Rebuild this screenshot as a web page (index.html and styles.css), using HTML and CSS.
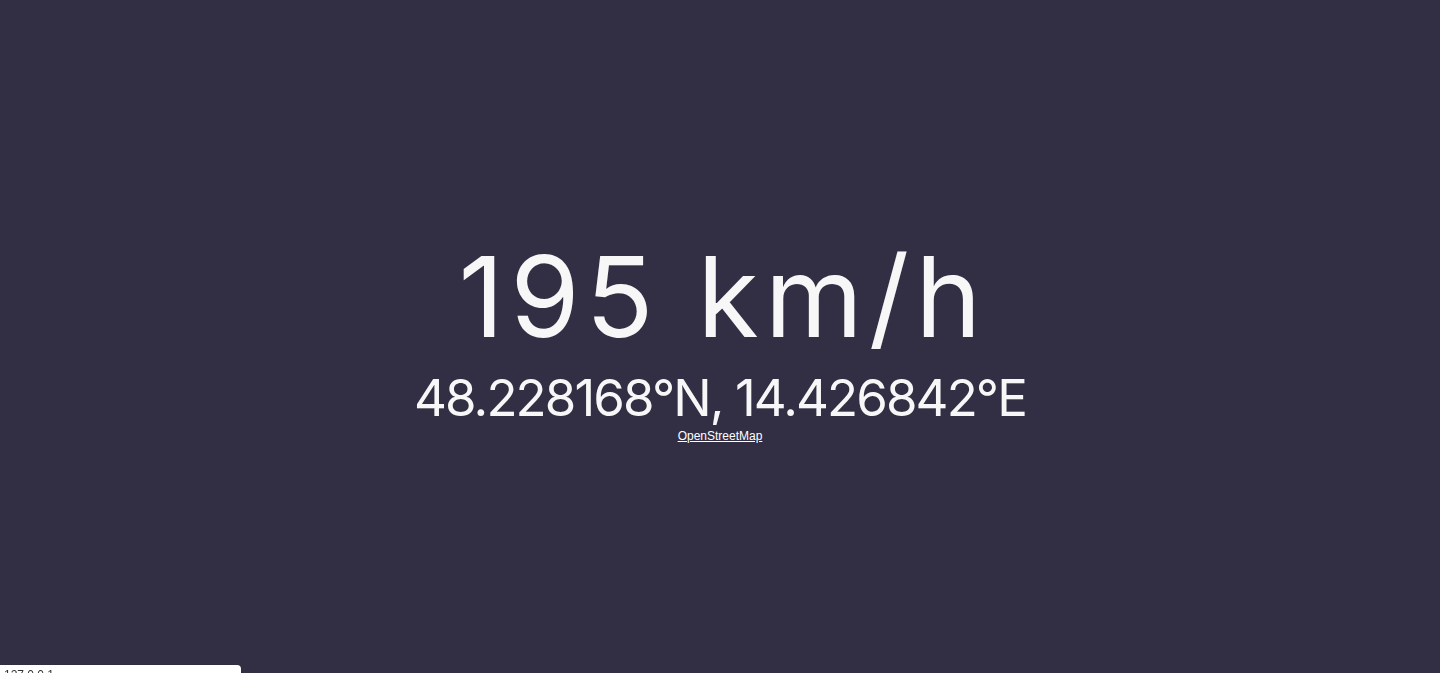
FILE: index.html
```html
<!DOCTYPE html>
<html lang="en">
<head>
<meta charset="utf-8">
<title>Speed</title>
<link rel="stylesheet" href="styles.css">
</head>
<body>
<main class="screen">
  <div class="speed">195 km/h</div>
  <div class="coords">48.228168°N, 14.426842°E</div>
  <a class="map-link" href="#">OpenStreetMap</a>
</main>
<div class="status">127.0.0.1</div>
</body>
</html>
```
FILE: styles.css
```css
html, body {
  margin: 0;
  height: 100%;
  background: #322e44;
  overflow: hidden;
}
.screen {
  height: 100%;
  display: flex;
  flex-direction: column;
  align-items: center;
  justify-content: center;
  color: #f7f7f7;
  font-family: Inter, "Liberation Sans", sans-serif;
  padding-top: 10px;
  box-sizing: border-box;
}
.speed {
  font-size: 112px;
  line-height: 1;
  font-weight: 400;
  letter-spacing: 6px;
  margin-right: -6px;
}
.coords {
  font-family: Inter, "Liberation Sans", sans-serif;
  font-size: 51px;
  line-height: 1;
  letter-spacing: -1.9px;
  margin-top: 20px;
}
.map-link {
  font-family: "Liberation Sans", Arial, sans-serif;
  font-size: 12px;
  color: #ffffff;
  text-decoration: underline;
  margin-top: 6px;
}
.status {
  position: fixed;
  left: 0;
  bottom: -18px;
  width: 233px;
  height: 20px;
  padding: 3px 4px;
  background: #ffffff;
  border-top-right-radius: 4px;
  font-family: "Liberation Sans", Arial, sans-serif;
  font-size: 12px;
  color: #333;
  box-shadow: 0 0 1px rgba(0,0,0,0.4);
}
```
